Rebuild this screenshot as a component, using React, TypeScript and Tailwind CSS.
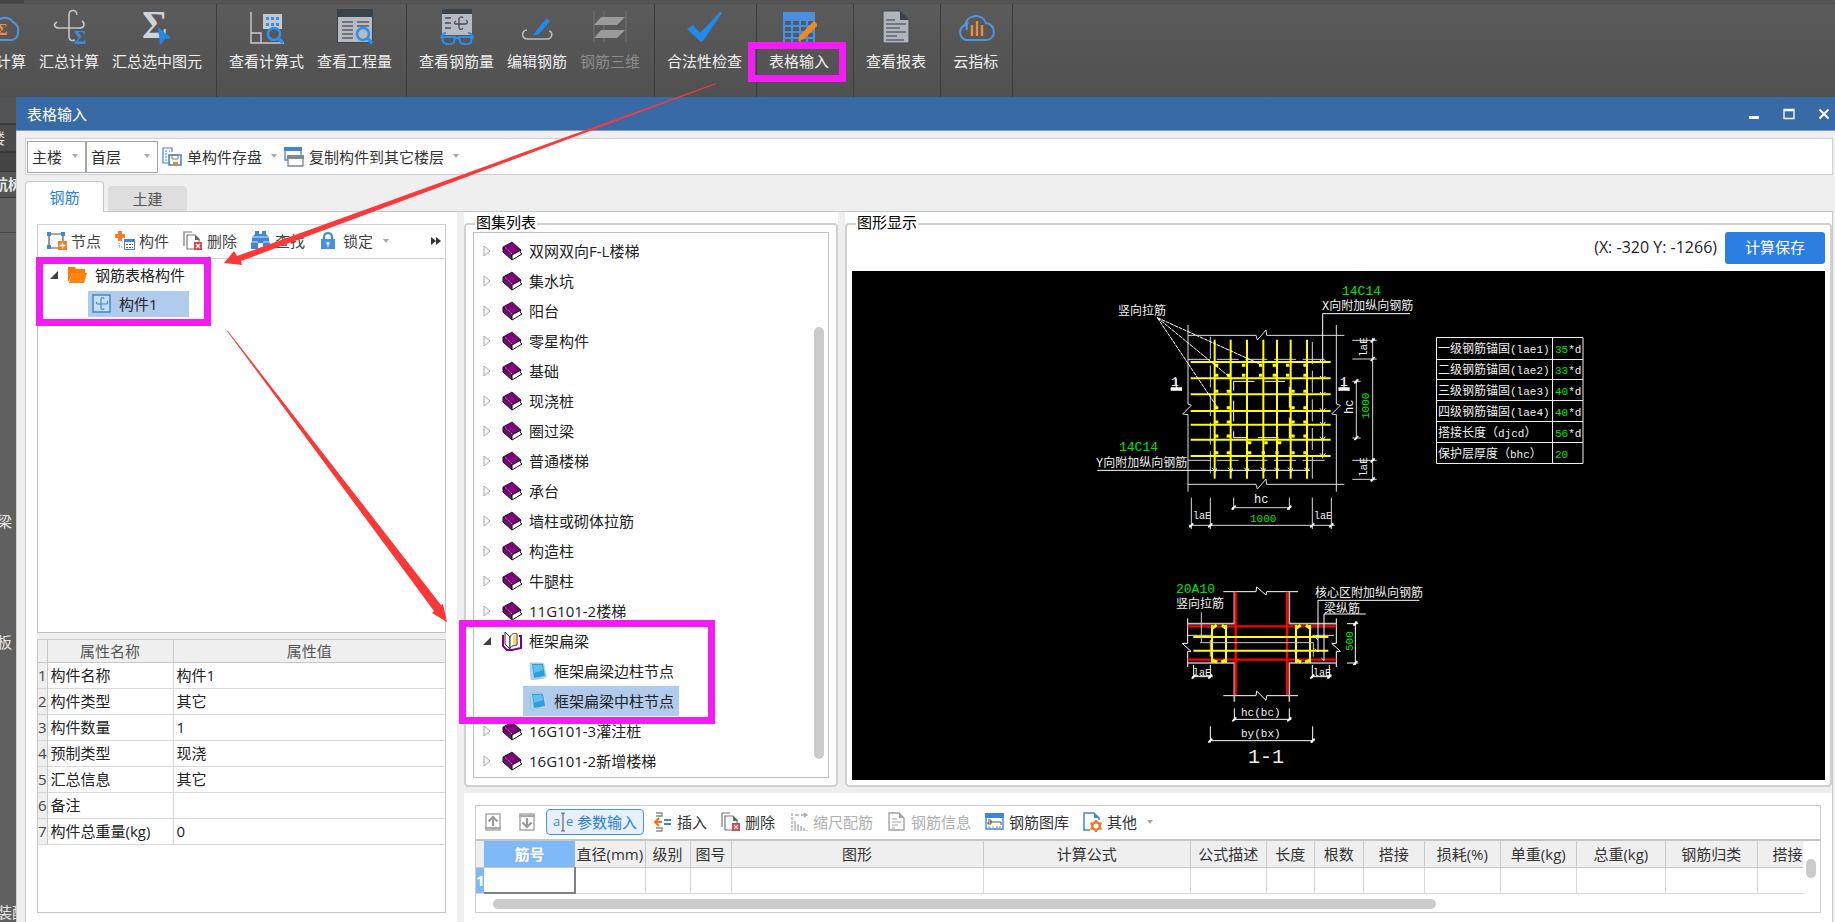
import type { ReactNode } from "react";

/* ---------- Ribbon icons (36 x 36) ---------- */

function Big({ children }: { children: ReactNode }) {
  return (
    <svg viewBox="0 0 36 36" className="h-9 w-9" fill="none" aria-hidden="true">
      {children}
    </svg>
  );
}

const SIGMA = "'Liberation Serif', serif";

const CloudSigma = () => (
  <Big>
    <path d="M8 31a7 7 0 0 1-1-13 8 8 0 0 1 8-8 10 10 0 0 1 13 3 9 9 0 0 1 5 10c0 5-3 8-7 8z" stroke="#4f97e0" strokeWidth="2" />
    <text x="12" y="26" fontSize="16" fontWeight="700" fontFamily={SIGMA} fill="#f08a3c">Σ</text>
  </Big>
);
const RebarSigma = () => (
  <Big>
    <path d="M26 6c0-6-8-6-8 0v21c0 5 3 5 6 4M6 13c-4 2-3 6 2 6h20c6 0 6-5 3-7" stroke="#c4c4c4" strokeWidth="1.6" />
    <text x="23" y="35" fontSize="19" fontWeight="700" fontFamily={SIGMA} fill="#3a8ce4">Σ</text>
  </Big>
);
const SigmaCursor = () => (
  <Big>
    <text x="3" y="29" fontSize="39" fontWeight="700" fontFamily={SIGMA} fill="#cfd2d6">Σ</text>
    <path d="M19 18l13 11-6 1-5 6z" fill="#1f8bef" />
  </Big>
);
const Formula = () => (
  <Big>
    <path d="M2 3v31h33M2 24h10v10" stroke="#c9ccd2" strokeWidth="1.4" />
    <path d="M14 5h19v15H14z" fill="#c3c7ce" />
    <path d="M17 8h3v3h-3zM22 8h3v3h-3zM27 8h3v3h-3zM17 14h3v3h-3zM22 14h3v3h-3zM27 14h3v3h-3z" fill="#3a8ce4" />
    <circle cx="25" cy="25" r="6" fill="#565656" stroke="#2f8ff0" strokeWidth="2.6" />
    <path d="M29 29l5 5" stroke="#2f8ff0" strokeWidth="3.4" />
  </Big>
);
const Quantity = () => (
  <Big>
    <path d="M0 0h36v34H0z" fill="#3c424c" />
    <path d="M1 8h34v25H1z" fill="#b7bac0" />
    <path d="M5 13h11M5 17h11M5 21h11M5 25h11M5 29h11M20 13h12M20 17h12" stroke="#565c66" strokeWidth="1.4" />
    <circle cx="26" cy="25" r="6" fill="#b7bac0" stroke="#2f8ff0" strokeWidth="2.6" />
    <path d="M30 29l5 5" stroke="#2f8ff0" strokeWidth="3.4" />
  </Big>
);
const RebarView = () => (
  <Big>
    <path d="M3 0h30v26H3z" fill="#b7bac0" />
    <path d="M3 0h30v5H3z" fill="#3c424c" />
    <path d="M6 9h6M6 14h6M6 19h6M24 9c-1-2-4-1-4 1v8c0 3 3 3 4 1M17 12c-2 1-2 3 0 3h9c3 0 3-3 1-4" stroke="#454b55" strokeWidth="1.3" />
    <path d="M2 29c1-5 4-5 5-5M34 29c-1-5-4-5-5-5M3 28h13l-1 5c-1 3-9 3-11 0zM20 28h13l-1 5c-1 3-9 3-11 0zM15 29h6" stroke="#2f8ff0" strokeWidth="2" />
  </Big>
);
const EditRebar = () => (
  <Big>
    <path d="M8 21c-6 0-6 9 1 9h19c6 0 6-8 2-8" stroke="#b9bcc1" strokeWidth="1.6" />
    <path d="M28 9l3 3-11 13-6 2 3-5z" fill="#1f8bef" />
  </Big>
);
const Rebar3d = () => (
  <Big>
    <path d="M2 2v31M12 2v31M34 2v31" stroke="#747474" />
    <path d="M9 8h24l-8 8H2zM9 21h24l-8 8H2z" fill="#9b9b9b" />
  </Big>
);
const Check = () => (
  <Big>
    <path d="M0 20l6-4 7 8L33 3l2 1-19 28-2 1z" fill="#1f8bef" />
  </Big>
);
const GridPen = () => (
  <Big>
    <path d="M2 3h32v33H2z" fill="#4a90df" />
    <path d="M4 12h6v4H4zM12 12h6v4h-6zM20 12h5v4h-5zM27 12h5v4h-5zM4 18h6v4H4zM12 18h6v4h-6zM20 18h5v4h-5zM27 18h5v4h-5zM4 24h6v4H4zM12 24h6v4h-6zM20 24h5v4h-5zM27 24h5v4h-5zM4 30h6v4H4zM12 30h6v4h-6zM20 30h5v4h-5zM27 30h5v4h-5z" fill="#4c5a6c" />
    <path d="M33 12l4 4-14 14-6 2 2-6z" fill="#f08a1c" />
  </Big>
);
const Report = () => (
  <Big>
    <path d="M5 2h17l9 9v23H5z" fill="#b0b4bb" stroke="#3c424c" />
    <path d="M22 2v9h9z" fill="#3c424c" />
    <path d="M8 11h9M8 15h20M8 19h14M8 23h20M8 27h11M8 31h18" stroke="#5c626c" strokeWidth="1.5" />
  </Big>
);
const CloudChart = () => (
  <svg viewBox="0 0 40 36" className="h-9 w-10" fill="none" aria-hidden="true">
    <path d="M10 31a8 8 0 0 1-1-15 11 11 0 0 1 21-2 9 9 0 0 1 8 9c0 5-4 8-8 8zM12 13a10 10 0 0 0-1 8" stroke="#4f97e0" strokeWidth="2" />
    <path d="M16 16v11M21 12v15M26 16v11" stroke="#f08a3c" strokeWidth="2.4" />
  </svg>
);

/* ---------- Toolbar icons (20 x 20) ---------- */

function Ico({ children }: { children: ReactNode }) {
  return (
    <svg viewBox="0 0 20 20" className="h-5 w-5 shrink-0" fill="none" aria-hidden="true">
      {children}
    </svg>
  );
}

const IcoNode = () => (
  <Ico>
    <path d="M2 3h14v14H2z" stroke="#555" strokeWidth="1.2" />
    <path d="M0 1h4v4H0zM14 1h4v4h-4zM0 14h4v4H0z" fill="#3f86d8" />
    <path d="M11 10h9v9h-9z" fill="#f57c20" />
    <path d="M15.500 11.500v6M12.500 14.500h6" stroke="#fff" strokeWidth="1.3" />
  </Ico>
);
const IcoMember = () => (
  <Ico>
    <path d="M3 0h4v3h3v4H7v3H3V7H0V3h3z" fill="#f08030" />
    <path d="M9.500 8.500h10v10h-10z" fill="#fff" stroke="#3f86d8" />
    <path d="M9 8h11v3H9z" fill="#3f86d8" />
    <path d="M11 13h2v1h-2zM14 13h2v1h-2zM17 13h1v1h-1zM11 16h2v1h-2zM14 16h2v1h-2zM17 16h1v1h-1z" fill="#555" />
    <path d="M4 12v4h4" stroke="#888" strokeDasharray="1 1" />
  </Ico>
);
const IcoDelete = () => (
  <Ico>
    <path d="M1 15V1h8" stroke="#777" strokeWidth="1.200" />
    <path d="M4 4h8l4 4v10H4z" fill="#fff" stroke="#777" strokeWidth="1.200" />
    <path d="M12 4l5 5h-5z" fill="#666" />
    <path d="M11 11h8v8h-8z" fill="#d9434b" />
    <path d="M13 13l4 4M17 13l-4 4" stroke="#fff" strokeWidth="1.300" />
  </Ico>
);
const IcoFind = () => (
  <Ico>
    <path d="M4 0h4v3h3V0h4v3l3 3v5h1v7h-7v-6H7v6H0v-7h1V6l3-3z" fill="#3f86d8" />
    <path d="M1 6h17M0 11h7M12 11h7" stroke="#fff" strokeWidth=".8" />
  </Ico>
);
const IcoLock = () => (
  <Ico>
    <path d="M5 9V6a4 4 0 0 1 8 0v3" stroke="#4a8fe0" strokeWidth="2.400" />
    <path d="M2 8h14v10H2z" fill="#4a8fe0" />
    <path d="M7.500 11h3v2l-1 1v2h-1v-2l-1-1z" fill="#fff" />
  </Ico>
);
const IcoSave = () => (
  <Ico>
    <path d="M6 16H1V1h9v4M3 4h2M3 7h2M3 10h2M3 13h2M7 4h1" stroke="#3f86d8" strokeWidth="1.200" />
    <path d="M7 8h12v10H7z" fill="#fff" stroke="#3f86d8" strokeWidth="1.600" />
    <path d="M10 8h6v4h-6z" stroke="#777" />
    <path d="M11 15h5v3h-5z" fill="#f08030" />
  </Ico>
);
const IcoCopyFloor = () => (
  <Ico>
    <path d="M1 1h16v12H1z" fill="#fff" stroke="#3f86d8" strokeWidth="1.300" />
    <path d="M0 0h18v4H0z" fill="#3f86d8" />
    <path d="M4 9h15v10H4z" fill="#fff" stroke="#7d8a8a" strokeWidth="1.300" />
    <path d="M3 8h17v4H3z" fill="#7d8a8a" />
  </Ico>
);
const IcoMove = ({ down = false }: { down?: boolean }) => (
  <Ico>
    <path d="M3 2h14v16H3z" stroke="#a8a8a8" strokeWidth="1.500" />
    <path d={down ? "M2 4h16" : "M2 16h16"} stroke="#a8a8a8" strokeWidth="2" />
    <path d={down ? "M10 6v9M5.500 10.500l4.500 4.500 4.500-4.500" : "M10 14V6M5.500 9.500L10 5l4.500 4.500"} stroke="#9a9a9a" strokeWidth="2.200" />
  </Ico>
);
const IcoParam = () => (
  <Ico>
    <text x="0" y="14" fontSize="13" fontFamily="'Open Sans', sans-serif" fill="#3f86d8">a</text>
    <text x="13" y="14" fontSize="13" fontFamily="'Open Sans', sans-serif" fill="#3f86d8">e</text>
    <path d="M8 1c2 0 2 0 2 2v14c0 2 0 2-2 2M12 1c-2 0-2 0-2 2M12 19c-2 0-2 0-2-2" stroke="#666" strokeWidth="1.200" />
  </Ico>
);
const IcoInsert = () => (
  <Ico>
    <path d="M3 1h6v3H3M3 19h6v-3H3" stroke="#8a8a8a" strokeWidth="1.300" />
    <path d="M9 10H3M6 6l-4 4 4 4" stroke="#f07020" strokeWidth="2" />
    <path d="M11 8h7M11 12h7" stroke="#3f86d8" strokeWidth="1.800" />
  </Ico>
);
const IcoScale = () => (
  <Ico>
    <path d="M3 1v18" stroke="#aaa" strokeWidth="1.300" strokeDasharray="3 1" />
    <path d="M6 3h4M12 3h6M15 1l3 2-3 2M6 9v10M9 12v7M12 14v5M15 16v3M18 18v1" stroke="#aaa" strokeWidth="1.300" />
  </Ico>
);
const IcoInfo = () => (
  <Ico>
    <path d="M2 1h10l5 5v12H2z" stroke="#a4a4a4" strokeWidth="1.400" />
    <path d="M12 1v5h5z" fill="#a4a4a4" />
    <path d="M5 7h5M5 10h9M5 13h6M5 16h3" stroke="#a4a4a4" strokeWidth="1.200" />
  </Ico>
);
const IcoLibrary = () => (
  <Ico>
    <path d="M1 2h17v15H1z" fill="#fff" stroke="#3f86d8" strokeWidth="1.400" />
    <path d="M0 1h19v5H0z" fill="#3f86d8" />
    <path d="M3 8h3v4H3v-2h3M6 10h10v3" stroke="#555" />
    <path d="M3 15h2" stroke="#3f86d8" />
    <path d="M7 15h2" stroke="#e8a020" />
    <path d="M11 15h2" stroke="#e04040" />
    <path d="M14 15h2" stroke="#40a040" />
  </Ico>
);
const IcoOther = () => (
  <Ico>
    <path d="M7 18H1V1h10l5 5v2" stroke="#3f86d8" strokeWidth="1.500" />
    <path d="M11 1v5h5z" fill="#3f86d8" />
    <circle cx="13" cy="14" r="3.800" stroke="#f07a28" strokeWidth="2.600" />
    <path d="M13 8v2M13 18v2M7.500 11l2 1M16.500 16l2 1M7.500 17l2-1M16.500 12l2-1" stroke="#f07a28" strokeWidth="2.400" />
  </Ico>
);
const IcoClosedBook = () => (
  <Ico>
    <path d="M1 6L10 1l9 8-9 5z" fill="#800080" stroke="#111" strokeWidth=".8" />
    <path d="M1 6v5l9 8v-5z" fill="#800080" stroke="#111" />
    <path d="M10 14l9-5-1 2 2 2-10 6z" fill="#fff" stroke="#111" />
    <path d="M3 6.500l7 6.500" stroke="#e9c4e9" strokeDasharray="1 1" />
  </Ico>
);
const IcoOpenBook = () => (
  <Ico>
    <path d="M1 4v11l4 4h5l9-2V5h-2" fill="#fff" stroke="#800080" strokeWidth="2" />
    <path d="M3 1l5 5v12l-5-5z" fill="#fff" stroke="#333" />
    <path d="M8 6c2-4 5-4 7-3v11c-3 0-5 1-7 3z" fill="#fff" stroke="#333" />
    <path d="M11 5l3-1v9l-3 1z" fill="#f2e060" />
  </Ico>
);
const IcoNote = () => (
  <Ico>
    <path d="M5 2h11l3 14-4 2-9 1z" fill="#b8d4e2" />
    <path d="M2 2h12l-1 2-1 13-9 2z" fill="#a8d8f0" stroke="#8fb4c8" strokeWidth=".6" />
    <path d="M4 3h11l2 12-11 2z" fill="#2f9fdc" />
    <path d="M5 4h9l1 5-9 3z" fill="#62c0ee" />
  </Ico>
);
const IcoComponent = () => (
  <Ico>
    <path d="M1 1h17v17H1z" fill="#c8e0fa" stroke="#3f86d8" strokeWidth="1.500" />
    <path d="M12 5c0-2-3-2-3 0v9c0 2 3 2 3 0M5 8c-1 1-1 2 1 2h8c2 0 2-2 1-3" stroke="#3f86d8" strokeWidth="1.200" />
  </Ico>
);
const IcoFolder = () => (
  <Ico>
    <path d="M1 2h7l1 2h9v4H5l-3 8H1z" fill="#ff7a00" />
    <path d="M5 8h15l-3 10H2z" fill="#ff8412" />
  </Ico>
);

const Caret = () => (
  <svg viewBox="0 0 8 5" className="h-[5px] w-2 shrink-0" aria-hidden="true">
    <path d="M1 0h6L4 4z" fill="#a9a9a9" />
  </svg>
);
const TreeClosed = () => (
  <svg viewBox="0 0 8 12" className="h-3 w-2 shrink-0" fill="none" aria-hidden="true">
    <path d="M1 1l6 5-6 5z" stroke="#a6a6a6" />
  </svg>
);
const TreeOpen = () => (
  <svg viewBox="0 0 8 8" className="h-2 w-2 shrink-0" aria-hidden="true">
    <path d="M8 0v8H0z" fill="#404040" />
  </svg>
);

/* ---------- Ribbon ---------- */

type Tool = { label: string; icon: ReactNode; disabled?: boolean };

const firstGroup: Tool[] = [
  { label: "云计算", icon: <CloudSigma /> },
  { label: "汇总计算", icon: <RebarSigma /> },
  { label: "汇总选中图元", icon: <SigmaCursor /> },
];
const ribbonGroups: Tool[][] = [
  [
    { label: "查看计算式", icon: <Formula /> },
    { label: "查看工程量", icon: <Quantity /> },
  ],
  [
    { label: "查看钢筋量", icon: <RebarView /> },
    { label: "编辑钢筋", icon: <EditRebar /> },
    { label: "钢筋三维", icon: <Rebar3d />, disabled: true },
  ],
  [{ label: "合法性检查", icon: <Check /> }],
];

function RibbonButton({ label, icon, disabled }: Tool) {
  return (
    <button
      type="button"
      disabled={disabled}
      className="flex shrink-0 flex-col items-center gap-[6px] whitespace-nowrap pt-[5px] text-[#f0f0f0] disabled:text-[#8c8c8c]"
    >
      {icon}
      <span>{label}</span>
    </button>
  );
}

function Ribbon() {
  const group = "flex shrink-0 items-start gap-[13px] border-r border-[#3c3c3c] pl-3";
  return (
    <header className="shrink-0 bg-linear-to-b from-[#5b5b5b] to-[#505050]">
      <div className="h-1 border-b border-[#4e4e4e] bg-[#555]">
        <div className="h-full w-6 bg-[#444]" />
      </div>
      <nav className="flex h-[93px] leading-5">
        <div className="flex w-[217px] shrink-0 items-start justify-end gap-[13px] overflow-hidden border-r border-[#3c3c3c] pr-[14px]">
          {firstGroup.map((t) => (
            <RibbonButton key={t.label} {...t} />
          ))}
        </div>
        {ribbonGroups.map((g) => (
          <div key={g[0].label} className={`${group} pr-[14px]`}>
            {g.map((t) => (
              <RibbonButton key={t.label} {...t} />
            ))}
          </div>
        ))}
        <div className={`${group} pr-6`}>
          <RibbonButton label="表格输入" icon={<GridPen />} />
        </div>
        <div className={`${group} pr-[14px]`}>
          <RibbonButton label="查看报表" icon={<Report />} />
        </div>
        <div className={`${group} pr-[14px]`}>
          <RibbonButton label="云指标" icon={<CloudChart />} />
        </div>
      </nav>
    </header>
  );
}

/* ---------- Dock behind the window ---------- */

function Dock() {
  return (
    <aside className="-ml-[22px] flex w-[38px] shrink-0 flex-col overflow-hidden whitespace-nowrap bg-[#606060] leading-5 text-[#e4e4e4]">
      <div className="h-[26px] bg-[#545454]" />
      <div className="h-[30px] border-y-2 border-[#383838] bg-[#4c4c4c] pl-3 pt-[3px]">楼</div>
      <div className="h-[18px] bg-[#444]" />
      <div className="h-[27px] border-y border-[#3a3a3a] bg-[#555] pt-[2px] font-bold">导航树</div>
      <div className="h-[35px] border-b border-[#454545]" />
      <div className="flex flex-1 flex-col pl-[19px]">
        <div className="mt-[278px]">梁</div>
        <div className="mt-[101px]">板</div>
        <div className="mt-auto">装配</div>
      </div>
    </aside>
  );
}

/* ---------- Left pane ---------- */

function ToolButton({ icon, label, disabled, caret }: { icon: ReactNode; label: string; disabled?: boolean; caret?: boolean }) {
  return (
    <button type="button" disabled={disabled} className="flex shrink-0 items-center gap-1 whitespace-nowrap disabled:text-[#b0b0b0]">
      {icon}
      {label}
      {caret && (
        <span className="pl-[5px]">
          <Caret />
        </span>
      )}
    </button>
  );
}

const properties = [
  ["构件名称", "构件1"],
  ["构件类型", "其它"],
  ["构件数量", "1"],
  ["预制类型", "现浇"],
  ["汇总信息", "其它"],
  ["备注", ""],
  ["构件总重量(kg)", "0"],
];

function LeftPane() {
  return (
    <section className="flex w-[431px] shrink-0 flex-col pb-[9px] pl-[11px] pr-[11px] pt-3">
      <div className="flex h-[35px] shrink-0 items-center gap-[14px] border border-[#d0d3d6] pb-px pl-[9px] pr-1 text-[#444]">
        <ToolButton icon={<IcoNode />} label="节点" />
        <ToolButton icon={<IcoMember />} label="构件" />
        <ToolButton icon={<IcoDelete />} label="删除" />
        <ToolButton icon={<IcoFind />} label="查找" />
        <ToolButton icon={<IcoLock />} label="锁定" caret />
        <button type="button" aria-label="更多" className="ml-auto">
          <svg viewBox="0 0 10 8" className="h-2 w-[10px]" aria-hidden="true">
            <path d="M0 0l5 4-5 4zM5 0l5 4-5 4z" fill="#333" />
          </svg>
        </button>
      </div>
      <div className="min-h-0 flex-1 border border-t-0 border-[#c0c0c0] pl-3 pt-px" role="tree">
        <div className="flex h-[30px] items-center" role="treeitem" aria-expanded="true">
          <TreeOpen />
          <span className="pl-[9px] pr-2">
            <IcoFolder />
          </span>
          钢筋表格构件
        </div>
        <div className="ml-[38px] mt-px flex h-[26px] w-[101px] items-center gap-[7px] bg-[#b1cbec] pl-1" role="treeitem" aria-selected="true">
          <IcoComponent />
          构件1
        </div>
      </div>
      <div className="h-[6px] shrink-0 bg-[#efefef]" />
      <div className="h-[274px] shrink-0 border border-[#c8c8c8]">
        <table className="w-full table-fixed border-collapse text-left">
          <thead>
            <tr className="h-[22px] border-b border-[#c8c8c8] bg-[#efefef] text-[#555]">
              <th className="w-[9px] border-r border-[#c8c8c8] p-0" aria-label="序号" />
              <th className="w-[126px] border-r border-[#c8c8c8] p-0 text-center font-normal leading-5">属性名称</th>
              <th className="p-0 text-center font-normal leading-5">属性值</th>
            </tr>
          </thead>
          <tbody>
            {properties.map(([name, value], i) => (
              <tr key={name} className="h-[26px] border-b border-[#d8d8d8]">
                <th className="border-r border-[#c8c8c8] bg-[#efefef] p-0 text-center font-normal leading-5 text-[#444]">{i + 1}</th>
                <td className="whitespace-nowrap border-r border-[#d8d8d8] py-0 pl-[3px] pr-0 leading-5">{name}</td>
                <td className="py-0 pl-[3px] pr-0 leading-5">{value}</td>
              </tr>
            ))}
          </tbody>
        </table>
      </div>
    </section>
  );
}

/* ---------- Atlas list ---------- */

const atlasTop = [
  "双网双向F-L楼梯", "集水坑", "阳台", "零星构件", "基础", "现浇桩", "圈过梁", "普通楼梯",
  "承台", "墙柱或砌体拉筋", "构造柱", "牛腿柱", "11G101-2楼梯",
];
const atlasBottom = ["16G101-3灌注桩", "16G101-2新增楼梯"];

function AtlasRow({ label }: { label: string }) {
  return (
    <li className="flex h-[30px] items-center" role="treeitem" aria-expanded="false">
      <TreeClosed />
      <span className="pl-[11px] pr-[7px]">
        <IcoClosedBook />
      </span>
      {label}
    </li>
  );
}

function AtlasList() {
  return (
    <fieldset className="mt-1 w-[374px] min-w-0 shrink-0 rounded border-2 border-[#cfd1d1] pb-[7px] pl-[7px] pr-[7px]">
      <legend className="ml-[2px] px-px pb-1 leading-3 text-black">图集列表</legend>
      <div className="flex h-full border border-[#c0c0c0] pl-[9px]">
        <ul className="min-w-0 flex-1 pt-[3px]" role="tree">
          {atlasTop.map((a) => (
            <AtlasRow key={a} label={a} />
          ))}
          <li className="flex h-[30px] items-center" role="treeitem" aria-expanded="true">
            <TreeOpen />
            <span className="pl-[11px] pr-[7px]">
              <IcoOpenBook />
            </span>
            框架扁梁
          </li>
          <li className="ml-10 flex h-[30px] w-[156px] items-center gap-[6px] pl-[5px]" role="treeitem">
            <IcoNote />
            框架扁梁边柱节点
          </li>
          <li className="ml-10 flex h-[30px] w-[156px] items-center gap-[6px] bg-[#b1cbec] pl-[5px]" role="treeitem" aria-selected="true">
            <IcoNote />
            框架扁梁中柱节点
          </li>
          {atlasBottom.map((a) => (
            <AtlasRow key={a} label={a} />
          ))}
        </ul>
        <div className="w-[14px] pb-[18px] pt-[94px]">
          <div className="h-full w-[10px] rounded-full bg-[#cbcbcb]" />
        </div>
      </div>
    </fieldset>
  );
}

/* ---------- Drawing ---------- */

type Note = { x: number; y: number; t: string; green?: boolean; latin?: number; turn?: boolean };

const notes: Note[] = [
  { x: 1118, y: 315, t: "竖向拉筋" },
  { x: 1342, y: 295, t: "14C14", green: true, latin: 13 },
  { x: 1322, y: 310, t: "X向附加纵向钢筋", latin: 12 },
  { x: 1119, y: 451, t: "14C14", green: true, latin: 13 },
  { x: 1096, y: 467, t: "Y向附加纵向钢筋", latin: 12 },
  { x: 1171, y: 386, t: "1", latin: 13 },
  { x: 1340, y: 386, t: "1", latin: 13 },
  { x: 1254, y: 503, t: "hc", latin: 12 },
  { x: 1250, y: 522, t: "1000", green: true, latin: 11 },
  { x: 1193, y: 519, t: "laE", latin: 10 },
  { x: 1314, y: 519, t: "laE", latin: 10 },
  { x: 1367, y: 357, t: "laE", turn: true },
  { x: 1367, y: 477, t: "laE", turn: true },
  { x: 1353, y: 414, t: "hc", turn: true, latin: 12 },
  { x: 1369, y: 419, t: "1000", turn: true, green: true, latin: 11 },
  { x: 1176, y: 593, t: "20A10", green: true, latin: 13 },
  { x: 1176, y: 608, t: "竖向拉筋" },
  { x: 1315, y: 597, t: "核心区附加纵向钢筋" },
  { x: 1324, y: 613, t: "梁纵筋" },
  { x: 1353, y: 651, t: "500", turn: true, green: true },
  { x: 1193, y: 676, t: "laE", latin: 10 },
  { x: 1313, y: 676, t: "laE", latin: 10 },
  { x: 1241, y: 716, t: "hc(bc)" },
  { x: 1241, y: 737, t: "by(bx)" },
  { x: 1248, y: 763, t: "1-1", latin: 20 },
];

const anchorRows = [
  ["一级钢筋锚固(lae1)", "35", "*d"],
  ["二级钢筋锚固(lae2)", "33", "*d"],
  ["三级钢筋锚固(lae3)", "40", "*d"],
  ["四级钢筋锚固(lae4)", "40", "*d"],
  ["搭接长度（djcd）", "56", "*d"],
  ["保护层厚度（bhc）", "20", ""],
];

function Mixed({ text, latin = 11 }: { text: string; latin?: number }) {
  return (
    <>
      {text.split(/([\x20-\x7e]+)/).map((part, i) =>
        i % 2 ? (
          <tspan key={i} fontSize={latin}>
            {part}
          </tspan>
        ) : (
          part
        ),
      )}
    </>
  );
}

const barX = [404, 452, 501, 550, 591, 632, 681];
const barY = [276, 325, 373, 423, 464, 509, 558];

function Drawing() {
  return (
    <svg
      viewBox="852 271 973 509"
      className="h-full w-full bg-black"
      fill="none"
      fontFamily="'Liberation Mono', 'Noto Sans CJK SC', monospace"
      fontSize="12"
      role="img"
      aria-label="框架扁梁中柱节点"
    >
      {/* plan */}
      <svg x="1080" y="270" width="350" height="260" viewBox="0 0 1050 780" stroke="#fff" strokeWidth="3">
        <path d="M324 165V402l10 4-26 26 16 2V665M769 165V402l12 4-26 26 14 2V665M324 196H528l4 14 26-30 2 16H793M324 643H528l4 14 26-30 2 16H793" stroke="#e0e0e0" />
        <path d="M391 200V620M697 216V640M324 268H750M324 571H750" stroke="#d4d4d4" strokeDasharray="66 20" />
        <path d="M461 334H628V503H461Z" strokeDasharray="62 30" />
        <path d="M403 600H404M52 601H690M728 131H990M728 131V565" />
        <path d="M720 270l8 10 8-10M720 318l8 10 8-10M720 366l8 10 8-10M720 415l8 10 8-10M720 456l8 10 8-10M720 500l8 10 8-10M720 550l8 10 8-10" />
        <g stroke="#ff0" strokeWidth="6">
          {barX.map((x) => (
            <path key={x} d={`M${x} 209V626`} />
          ))}
          {barY.map((y) => (
            <path key={y} d={`M332 ${y}H752`} />
          ))}
        </g>
        <g stroke="#ff0" strokeWidth="9">
          <path d="M405 286h10M440 316h10M405 316h10M486 286h10M486 316h10M537 286h10M537 316h10M578 286h10M578 316h10M618 286h10M618 316h10M670 286h10M670 316h10" />
          <path d="M405 364h10M440 364h10M405 413h10M440 413h10M405 456h10M440 456h10M405 498h10M440 498h10M405 548h10M440 548h10M634 364h10M670 364h10M634 413h10M670 413h10M634 456h10M670 456h10M634 498h10M670 498h10M634 548h10M670 548h10" />
          <path d="M504 518h10M553 518h10M594 518h10M504 548h10M545 548h10M586 548h10" />
        </g>
        <path d="M232 143L546 285M232 143L450 322M232 143L412 412" strokeDasharray="12 2" />
        {barX.map((x) => (
          <path key={x} d={`M${x - 8} 593l10 12 4-10`} />
        ))}
        <path d="M272 357h34M775 357h34" strokeWidth="11" />
        <path d="M289 325v30M792 325v30" />
        <path d="M334 683V777M391 683V777M697 683V777M754 683V777M326 766H764M461 683V720M628 683V720M456 713H634" stroke="#d8d8d8" />
        <path d="M817 211H890M817 267H890M817 571H890M817 628H890M878 204V634M829 328V508M817 334H842M817 504H842" stroke="#d8d8d8" />
        <path d="M328 772l12-12M385 772l12-12M691 772l12-12M748 772l12-12M455 719l12-12M622 719l12-12M872 217l12-12M872 273l12-12M872 577l12-12M872 634l12-12M823 340l12-12M823 510l12-12" strokeWidth="5" />
      </svg>

      {/* section 1-1 */}
      <svg x="1140" y="560" width="320" height="220" viewBox="0 0 960 660" stroke="#fff" strokeWidth="3">
        <path d="M250 95H348l2-14 28 24 2-10H474M250 407H348l2-14 28 28 2-14H474" />
        <path d="M143 175V250l-16 0 26 24-10 0V321M589 175V250l-14 0 26 24-12 0V321" />
        <path d="M283 95V191H143M448 95V191H589M143 309H283V425M589 309H448V425" stroke="#bdbdbd" strokeWidth="5" />
        <path d="M143 199H589M143 299H589M287 95V405M441 95V405" stroke="#f00" strokeWidth="7" />
        <path d="M143 226H214M517 226H582" stroke="#ddd" />
        <g stroke="#ff0" strokeWidth="6">
          <path d="M160 231H565M160 272H565" />
          <path d="M216 195V309M258 195V309M468 195V309M510 195V309" />
          <path d="M214 206l16-10M246 196l14 10M214 300l18 6M244 306l16-6M466 206l16-10M498 196l14 10M466 300l18 6M496 306l16-6" strokeWidth="9" />
        </g>
        <path d="M184 157V248H520V290M211 240V290M180 248H184" stroke="#ccc" />
        <path d="M838 121H534V276l-10-10M534 240l-10-10M677 162H552V302l-8-8" />
        <path d="M161 315V355M211 315V355M157 350H218M517 315V355M568 315V355M513 350H574" />
        <path d="M283 445V482M448 445V482M279 478H454M211 499V548M518 499V548M207 542H524" />
        <path d="M621 191H655M621 309H655M646 184V315" />
        <path d="M155 356l12-12M205 356l12-12M511 356l12-12M562 356l12-12M277 484l12-12M442 484l12-12M205 548l12-12M512 548l12-12M640 197l12-12M640 315l12-12" strokeWidth="5" />
      </svg>

      {/* anchorage table */}
      <path
        d="M1436.500 337.500H1583V463.500H1436.500ZM1552.500 337.500V463.500M1436.500 359.500H1583M1436.500 379.500H1583M1436.500 400.500H1583M1436.500 421.500H1583M1436.500 442.500H1583"
        stroke="#f0f0f0"
      />
      {anchorRows.map(([name, value, unit], i) => (
        <text key={name} y={353 + i * 21} fill="#f0f0f0">
          <tspan x="1438">
            <Mixed text={name} />
          </tspan>
          <tspan x="1555" fontSize="11" fill="#00e600">
            {value}
          </tspan>
          <tspan fontSize="11">{unit}</tspan>
        </text>
      ))}

      {notes.map((n, i) => (
        <text
          key={i}
          x={n.x}
          y={n.y}
          fill={n.green ? "#00e600" : "#f0f0f0"}
          transform={n.turn ? `rotate(-90 ${n.x} ${n.y})` : undefined}
        >
          <Mixed text={n.t} latin={n.latin} />
        </text>
      ))}
    </svg>
  );
}

function Viewer() {
  return (
    <fieldset className="mt-1 min-w-0 flex-1 rounded border-2 border-[#cfd1d1] px-[5px] pb-[5px]">
      <legend className="ml-1 px-px pb-1 leading-3 text-black">图形显示</legend>
      <div className="flex h-full flex-col">
        <div className="flex h-[39px] shrink-0 items-start justify-end gap-2">
          <output className="text-base leading-[30px] text-[#222]">(X: -320 Y: -1266)</output>
          <button type="button" className="h-8 w-[100px] rounded-[3px] bg-[#2b7fe2] pb-[2px] text-white">
            计算保存
          </button>
        </div>
        <div className="min-h-0 flex-1">
          <Drawing />
        </div>
      </div>
    </fieldset>
  );
}

/* ---------- Rebar grid ---------- */

const columns: { label: string; width: string }[] = [
  { label: "直径(mm)", width: "w-[70px]" },
  { label: "级别", width: "w-[45px]" },
  { label: "图号", width: "w-[41px]" },
  { label: "图形", width: "w-[252px]" },
  { label: "计算公式", width: "w-[207px]" },
  { label: "公式描述", width: "w-[76px]" },
  { label: "长度", width: "w-[48px]" },
  { label: "根数", width: "w-[49px]" },
  { label: "搭接", width: "w-[61px]" },
  { label: "损耗(%)", width: "w-[76px]" },
  { label: "单重(kg)", width: "w-[76px]" },
  { label: "总重(kg)", width: "w-[89px]" },
  { label: "钢筋归类", width: "w-[92px]" },
  { label: "搭接形式", width: "w-[90px]" },
];

function RebarGrid() {
  return (
    <section className="h-[129px] shrink-0 bg-white pb-[9px] pl-[11px] pr-[11px] pt-3">
      <div className="flex h-full flex-col border border-[#c8cdd2] text-[#333]">
        <div className="flex h-[33px] shrink-0 items-center gap-[14px] pb-px pl-[7px]">
          <button type="button" aria-label="上移">
            <IcoMove />
          </button>
          <button type="button" aria-label="下移">
            <IcoMove down />
          </button>
          <button
            type="button"
            aria-pressed="true"
            className="-mx-[5px] flex h-[26px] items-center gap-1 rounded border border-[#4a94e6] bg-[#e6f1fd] px-[6px] text-[#2b7fe2]"
          >
            <IcoParam />
            参数输入
          </button>
          <ToolButton icon={<IcoInsert />} label="插入" />
          <ToolButton icon={<IcoDelete />} label="删除" />
          <ToolButton icon={<IcoScale />} label="缩尺配筋" disabled />
          <ToolButton icon={<IcoInfo />} label="钢筋信息" disabled />
          <ToolButton icon={<IcoLibrary />} label="钢筋图库" />
          <ToolButton icon={<IcoOther />} label="其他" caret />
        </div>
        <div className="flex shrink-0 border-t-2 border-[#c4c4c4]">
          <div className="min-w-0 flex-1 overflow-hidden">
            <table className="w-[1372px] table-fixed border-collapse">
              <thead>
                <tr className="h-[26px] border-b border-[#c8c8c8] bg-[#efefef]">
                  <th className="w-2 p-0" aria-label="序号" />
                  <th className="w-[91px] bg-[#7fb9f8] p-0 font-bold leading-5 text-white">筋号</th>
                  {columns.map((c, i) => (
                    <th key={i} className={`${c.width} whitespace-nowrap border-r border-[#c8c8c8] p-0 font-normal leading-5`}>
                      {c.label}
                    </th>
                  ))}
                </tr>
              </thead>
              <tbody>
                <tr className="h-[26px] border-b border-[#d8d8d8]">
                  <th className="bg-[#7fb9f8] p-0 text-center font-bold leading-5 text-white">1</th>
                  <td className="border-b-2 border-r-2 border-[#808080] p-0" />
                  {columns.map((_, i) => (
                    <td key={i} className="border-r border-[#d8d8d8] p-0" />
                  ))}
                </tr>
              </tbody>
            </table>
          </div>
          <div className="w-[17px] pl-[3px] pt-[18px]">
            <div className="h-[19px] w-[10px] rounded-full bg-[#cbcbcb]" />
          </div>
        </div>
        <div className="px-[17px] pt-[5px]">
          <div className="h-[10px] w-[72%] rounded-full bg-[#cbcbcb]" />
        </div>
      </div>
    </section>
  );
}

/* ---------- Window ---------- */

function Picker({ label, value, width }: { label: string; value: string; width: string }) {
  return (
    <label className={`relative flex h-8 items-center border border-[#a6a6a6] ${width}`}>
      <select aria-label={label} className="h-full w-full appearance-none bg-white pl-1 outline-none" defaultValue={value}>
        <option>{value}</option>
      </select>
      <span className="pointer-events-none absolute right-[6px]">
        <Caret />
      </span>
    </label>
  );
}

function InputWindow() {
  return (
    <main className="flex min-w-0 flex-1 flex-col bg-[#efefef]">
      <div className="flex h-[34px] shrink-0 items-center border-b border-[#7c9cc4] bg-[#386aa6] pl-[11px] pr-[5px] text-white">
        <h1 className="flex-1">表格输入</h1>
        <button type="button" aria-label="最小化" className="mr-[23px]">
          <svg viewBox="0 0 12 12" className="h-3 w-3" aria-hidden="true">
            <path d="M1 9.500h10" stroke="#fff" strokeWidth="3" />
          </svg>
        </button>
        <button type="button" aria-label="最大化" className="mr-[23px]">
          <svg viewBox="0 0 12 12" className="h-3 w-3" fill="none" aria-hidden="true">
            <path d="M1 1.500h10v9H1zM1 2.500h10" stroke="#fff" strokeWidth="1.300" />
          </svg>
        </button>
        <button type="button" aria-label="关闭">
          <svg viewBox="0 0 12 12" className="h-3 w-3" aria-hidden="true">
            <path d="M1.500 1.500l9 9M10.500 1.500l-9 9" stroke="#fff" strokeWidth="2" />
          </svg>
        </button>
      </div>
      <div className="flex min-h-0 flex-1 flex-col border-l border-[#c9d0d8] pl-2 pr-[2px] pt-[7px]">
        <div className="flex h-[37px] shrink-0 items-center border border-[#cdd1d5] bg-white pl-px text-[#333]">
          <Picker label="楼栋" value="主楼" width="w-[59px]" />
          <Picker label="楼层" value="首层" width="w-[72px]" />
          <button type="button" className="ml-1 flex items-center gap-[5px]">
            <IcoSave />
            单构件存盘
            <span className="pl-[3px]">
              <Caret />
            </span>
          </button>
          <button type="button" className="ml-[6px] flex items-center gap-[5px]">
            <IcoCopyFloor />
            复制构件到其它楼层
            <span className="pl-[3px]">
              <Caret />
            </span>
          </button>
        </div>
        <div className="flex shrink-0 items-end gap-1 pt-[6px]" role="tablist">
          <button
            type="button"
            role="tab"
            aria-selected="true"
            className="relative z-10 -mb-px h-[31px] w-[79px] rounded-t border border-b-0 border-[#c4c8cc] bg-white text-[#2b7fe2]"
          >
            钢筋
          </button>
          <button type="button" role="tab" aria-selected="false" className="h-[25px] w-[79px] rounded-t bg-[#dedede] text-[#555]">
            土建
          </button>
        </div>
        <div className="flex min-h-0 flex-1 border border-b-0 border-[#c4c8cc] bg-white text-[#222]">
          <LeftPane />
          <div className="w-[7px] shrink-0 bg-[#efefef]" />
          <div className="flex min-w-0 flex-1 flex-col">
            <div className="flex min-h-0 flex-1">
              <AtlasList />
              <div className="w-[7px] shrink-0 bg-[#efefef]" />
              <Viewer />
            </div>
            <div className="h-[6px] shrink-0 bg-[#efefef]" />
            <RebarGrid />
          </div>
        </div>
      </div>
    </main>
  );
}

/* ---------- Tutorial marks drawn over the page ---------- */

function Marks() {
  return (
    <div className="pointer-events-none absolute inset-0 z-20 overflow-hidden">
      <svg className="absolute left-0 top-0 h-[922px] w-[1835px]" viewBox="0 0 1835 922" aria-hidden="true">
        <path d="M716 83L716 84L241 261L242 265L224 263L234 251L237 256Z" fill="#fb3838" />
        <path d="M227 331L228 331L441 605L443 604L447 622L432 613L434 611Z" fill="#fb3838" />
      </svg>
      <div className="absolute left-[748px] top-[42px] h-10 w-[98px] border-[7px] border-[#f41cf4]" />
      <div className="absolute left-[36px] top-[257px] h-[69px] w-[175px] border-[7px] border-[#f41cf4]" />
      <div className="absolute left-[459px] top-[620px] h-[104px] w-[256px] border-[7px] border-[#f41cf4]" />
    </div>
  );
}

export default function App() {
  return (
    <div className="relative flex h-screen min-h-[922px] flex-col overflow-hidden bg-[#606060] font-['Open_Sans','Noto_Sans_CJK_SC',sans-serif] text-[15px] leading-5">
      <Ribbon />
      <div className="flex min-h-0 flex-1">
        <Dock />
        <InputWindow />
      </div>
      <Marks />
    </div>
  );
}
